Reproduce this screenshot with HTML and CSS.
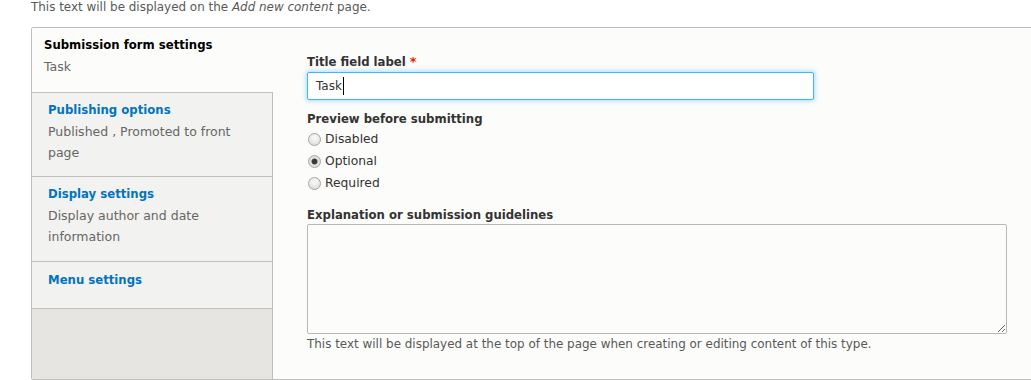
FILE: index.html
```html
<!DOCTYPE html>
<html lang="en">
<head>
<meta charset="utf-8">
<title>Content type settings</title>
<link rel="stylesheet" href="styles.css">
</head>
<body>
<div class="top-desc">This text will be displayed on the <em>Add new content</em> page.</div>

<div class="vtabs">
  <ul class="vtabs-menu">
    <li class="vtabs-item is-selected">
      <span class="vtabs-title">Submission form settings</span>
      <span class="vtabs-summary">Task</span>
    </li>
    <li class="vtabs-item">
      <span class="vtabs-title">Publishing options</span>
      <span class="vtabs-summary">Published , Promoted to front page</span>
    </li>
    <li class="vtabs-item is-tall">
      <span class="vtabs-title">Display settings</span>
      <span class="vtabs-summary">Display author and date information</span>
    </li>
    <li class="vtabs-item is-empty">
      <span class="vtabs-title">Menu settings</span>
    </li>
  </ul>

  <div class="vtabs-pane">
    <div class="field field-title">
      <label class="field-label">Title field label <span class="required">*</span></label>
      <div class="text-input is-focused"><span class="text-value">Task</span><span class="caret"></span></div>
    </div>

    <div class="field field-preview">
      <div class="field-label">Preview before submitting</div>
      <label class="radio-row"><input type="radio" name="preview" class="radio"><span>Disabled</span></label>
      <label class="radio-row"><input type="radio" name="preview" class="radio" checked><span>Optional</span></label>
      <label class="radio-row"><input type="radio" name="preview" class="radio"><span>Required</span></label>
    </div>

    <div class="field field-help">
      <label class="field-label">Explanation or submission guidelines</label>
      <textarea class="textarea"></textarea>
      <div class="field-desc">This text will be displayed at the top of the page when creating or editing content of this type.</div>
    </div>
  </div>
</div>
</body>
</html>
```
FILE: styles.css
```css
html, body {
  margin: 0;
  padding: 0;
  overflow: hidden;
  background: #ffffff;
}

body {
  font-family: "DejaVu Sans", "Liberation Sans", sans-serif;
  color: #333333;
}

.top-desc {
  padding-left: 31px;
  font-size: 11.95px;
  line-height: 14px;
  color: #595959;
  margin-bottom: 13px;
}

.top-desc em {
  font-style: italic;
}

.vtabs {
  display: flex;
  margin-left: 31px;
  margin-right: -30px;
  border: 1px solid #bfbfbd;
  border-radius: 2px;
  background: #fcfcfa;
}

.vtabs-menu {
  list-style: none;
  margin: 0;
  padding: 0;
  width: 240px;
  flex: 0 0 240px;
  background: #e6e5e1;
  border-right: 1px solid #bfbfbd;
  border-radius: 2px 0 0 2px;
}

.vtabs-item {
  display: block;
  padding: 8px 16px 13px 16px;
  background: #f2f2f0;
  border-bottom: 1px solid #bfbfbd;
}

.vtabs-item.is-selected {
  padding: 8px 12px 15px 12px;
  background: #fcfcfa;
  margin-right: -1px;
  border-radius: 2px 0 0 0;
}

.vtabs-item.is-tall {
  padding-bottom: 14px;
}

.vtabs-item.is-empty {
  padding-top: 9px;
  padding-bottom: 19px;
}

.vtabs-title {
  display: block;
  font-weight: bold;
  font-size: 11.7px;
  line-height: 18px;
  color: #0074bd;
}

.is-selected .vtabs-title {
  color: #000000;
}

.vtabs-summary {
  display: block;
  margin-top: 2px;
  font-size: 12.5px;
  line-height: 21px;
  color: #666666;
}

.vtabs-pane {
  flex: 1 1 auto;
  padding: 24px 24px 27px 34px;
  background: #fcfcfa;
}

.field-label {
  display: block;
  padding-top: 1px;
  font-weight: bold;
  font-size: 11.7px;
  line-height: 18px;
  color: #333333;
}

.required {
  color: #e32700;
  font-size: 13px;
}

.text-input {
  display: flex;
  align-items: center;
  box-sizing: border-box;
  width: 507px;
  height: 28px;
  margin-top: 1px;
  padding: 0 7px 0 8px;
  background: #ffffff;
  border: 1px solid #40b6ff;
  border-radius: 2px;
  box-shadow: 0 0 4px 1px rgba(64, 182, 255, 0.45);
  font-size: 12px;
  color: #333333;
}

.caret {
  display: inline-block;
  width: 1px;
  height: 18px;
  background: #000000;
  margin-left: 1px;
}

.field-preview {
  margin-top: 9px;
}

.radio-row {
  display: flex;
  align-items: center;
  height: 22px;
  font-size: 12.3px;
  color: #333333;
}

.radio {
  appearance: none;
  -webkit-appearance: none;
  box-sizing: border-box;
  width: 13px;
  height: 13px;
  margin: 0 4px 0 1px;
  border: 1px solid #a6a6a6;
  border-radius: 50%;
  background: radial-gradient(circle at 50% 35%, #fbfbfb 0%, #e8e8e8 55%, #d2d2d2 100%);
}

.radio:checked {
  background: radial-gradient(circle, #3a3a3a 0, #3a3a3a 2.2px, #6a6a6a 2.8px, #e4e4e4 3.4px, #d8d8d8 100%);
}

.field-help {
  margin-top: 11px;
}

.textarea {
  display: block;
  box-sizing: border-box;
  width: 700px;
  height: 110px;
  margin: 0;
  padding: 4px 6px;
  background: #fcfcfa;
  border: 1px solid #b8b8b8;
  border-radius: 2px;
  font-family: inherit;
  resize: vertical;
}

.field-desc {
  margin-top: 2px;
  font-size: 11.95px;
  line-height: 16px;
  color: #595959;
}
```
